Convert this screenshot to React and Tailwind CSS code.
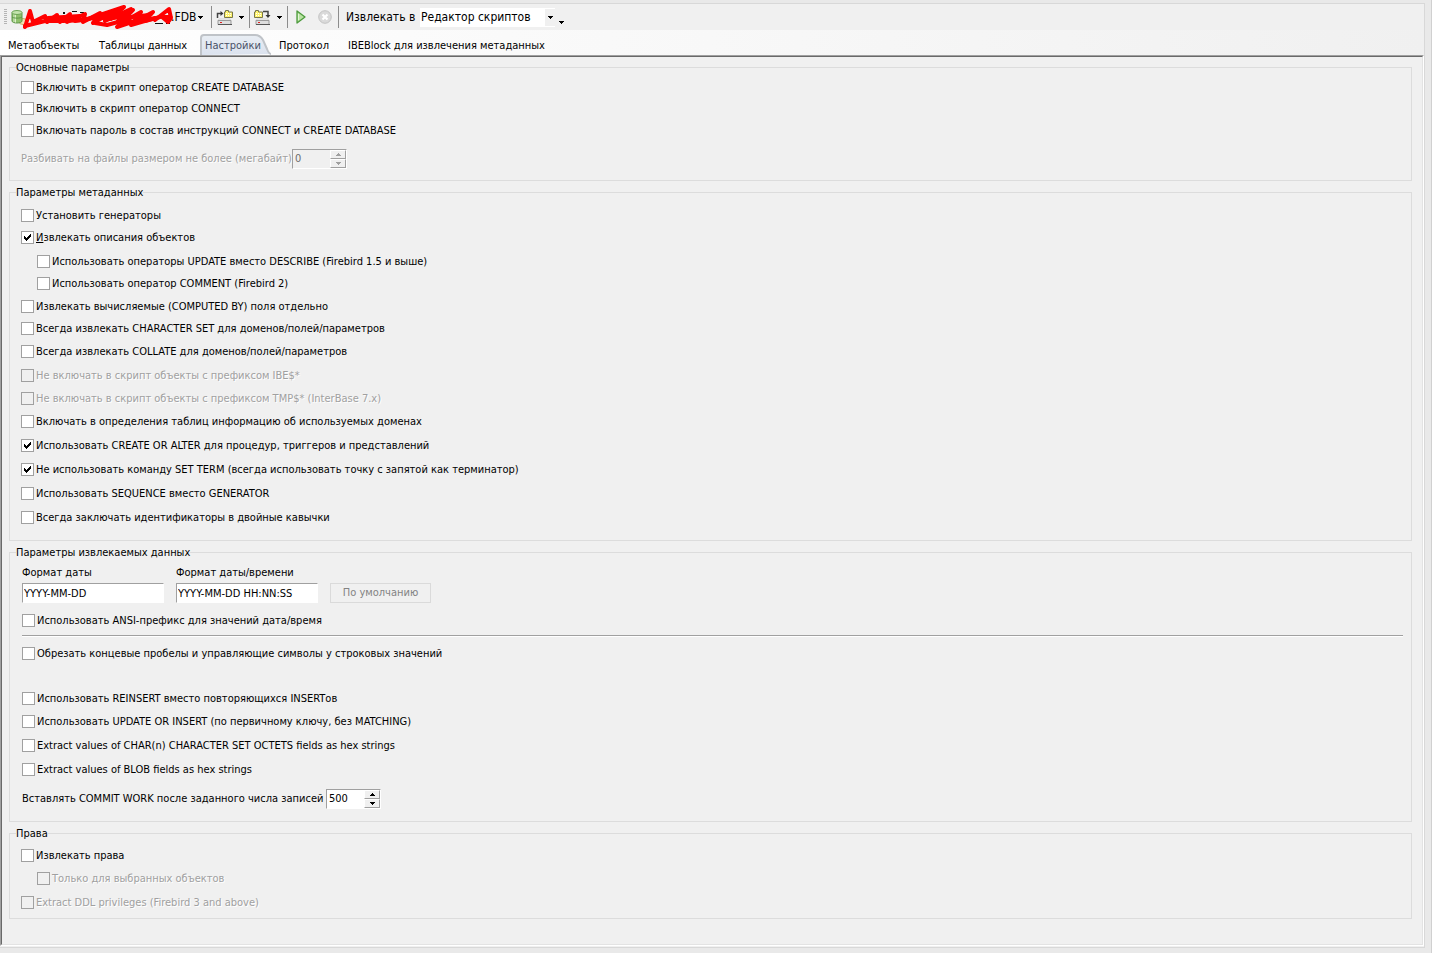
import { useState } from "react"
import clsx from "clsx"

const Check = ({ label, id, className, defaultChecked = false, disabled = false, accessKey }) => (
  <div className={clsx("flex h-4 items-center gap-0.5", className)}>
    <span className="grid shrink-0">
      <input
        id={id}
        type="checkbox"
        defaultChecked={defaultChecked}
        disabled={disabled}
        className="peer col-start-1 row-start-1 size-[13px] appearance-none border border-[#a0a0a0] bg-white disabled:bg-[#f0f0f0]"
      />
      <svg
        viewBox="0 0 13 13"
        shapeRendering="crispEdges"
        className="pointer-events-none invisible col-start-1 row-start-1 size-[13px] peer-checked:visible"
      >
        <path d="M3 5h1v1h1v1h1v-1h1v-1h1v-1h1v-1h1v3h-1v1h-1v1h-1v1h-1v1h-1v-1h-1v-1h-1z" />
      </svg>
    </span>
    <label
      htmlFor={id}
      className={clsx("pt-0.5 whitespace-nowrap", disabled && "text-[#a0a0a0] [text-shadow:1px_1px_0_#fff]")}
    >
      {accessKey ? (
        <>
          <u>{label[0]}</u>
          {label.slice(1)}
        </>
      ) : (
        label
      )}
    </label>
  </div>
)

const Group = ({ title, className, children }) => (
  <fieldset className="mt-1 min-w-0 border border-[#dcdcdc] first:mt-[3px]">
    <legend className="ml-1.5 h-3.5 leading-4">{title}</legend>
    <div className={className}>{children}</div>
  </fieldset>
)

const sunken = "border border-t-[#a0a0a0] border-l-[#a0a0a0] border-r-white border-b-white"

const SpinButton = ({ label, up, disabled, onClick }) => (
  <button
    type="button"
    aria-label={label}
    disabled={disabled}
    onClick={onClick}
    className="flex flex-1 items-center justify-center border border-t-white border-l-white border-r-[#a0a0a0] border-b-[#a0a0a0] bg-[#f0f0f0] text-black disabled:text-[#a0a0a0]"
  >
    <svg viewBox="0 0 5 3" className="h-[3px] w-[5px]" shapeRendering="crispEdges" fill="currentColor">
      <path d={up ? "M2 0h1v1h1v1h1v1H0V2h1V1h1z" : "M0 0h5v1H4v1H3v1H2V2H1V1H0z"} />
    </svg>
  </button>
)

const Spin = ({ id, initial, disabled = false }) => {
  const [value, setValue] = useState(initial)
  return (
    <div className={clsx("flex h-5 w-[55px]", sunken, disabled ? "bg-[#f0f0f0]" : "bg-white")}>
      <input
        id={id}
        type="text"
        value={value}
        disabled={disabled}
        onChange={(e) => setValue(Number(e.target.value) || 0)}
        className="w-0 flex-1 pl-0.5 outline-none disabled:text-[#6d6d6d]"
      />
      <div className="flex w-4 flex-col">
        <SpinButton label="Больше" up disabled={disabled} onClick={() => setValue(value + 1)} />
        <SpinButton label="Меньше" disabled={disabled} onClick={() => setValue(value - 1)} />
      </div>
    </div>
  )
}

const Arrow = () => (
  <svg viewBox="0 0 5 3" className="h-[3px] w-[5px] shrink-0" shapeRendering="crispEdges">
    <path d="M0 0h5v1H4v1H3v1H2V2H1V1H0z" />
  </svg>
)

const Separator = () => <div className="h-[22px] w-px shrink-0 bg-[#8c8c8c]" />

const DatabaseIcon = () => (
  <svg viewBox="0 0 16 16" className="size-4 shrink-0">
    <ellipse cx="12" cy="12.5" rx="4" ry="3" fill="#efe0b4" stroke="#c9ae68" />
    <path d="M1 3.5v8.5c0 1.2 2.2 2 5 2s5-.8 5-2V3.5z" fill="#8fc06c" stroke="#5c9648" />
    <path d="M3 5v8M4.500 5.500v8" stroke="#dcf0cc" />
    <ellipse cx="6" cy="3.5" rx="5" ry="2" fill="#c4e4ae" stroke="#6ba455" />
    <path d="M1 8c1 1.500 9 1.500 10 0" fill="none" stroke="#5c9648" />
  </svg>
)

const Scribble = () => (
  <svg viewBox="0 0 152 26" className="h-[26px] w-[152px]" fill="none">
    <path
      d="M40 8h2v2h-2zM49 7h5v1h-5zM57 8h4v1h-4zM106 18h5v1h-5zM112 17h3v1h-3zM132 19h8v1h-8zM143 19h4v1h-4z"
      fill="#111"
    />
    <g stroke="#f00" strokeWidth="4" strokeLinecap="round" strokeLinejoin="round">
      <path d="M2 23 7 7 10 18 22 12 24 18 34 11 37 18 47 10 44 18 62 10 60 18 77 9 70 19 92 7 82 17 108 5 95 17" />
      <path d="M2 22 22 17 40 17 62 16 86 8 101 3 88 15 110 6 97 20 118 8 110 19 130 8 122 17 137 13" />
      <path d="M72 19 84 21 106 15 94 23 121 14 108 21 132 14" />
      <path d="M25 14 57 12M52 17 82 12M82 15 104 12M100 14 126 11M132 16 146 5 148 14 145 18 139 13 148 13" />
    </g>
  </svg>
)

const Drive = () => (
  <>
    <path d="M3 10h11l1 2H2z" fill="#f4f4f4" stroke="#b5b5b5" strokeWidth=".5" />
    <path d="M2 11.500h13v4H2z" fill="#dedede" stroke="#9b9b9b" />
    <path d="M4 13h2v1H4z" fill="#e02020" />
    <path d="M2 15h14v1H2z" fill="#555" />
  </>
)

const FromFolderIcon = () => (
  <svg viewBox="0 0 17 17" className="size-[17px]">
    <path d="M9.500 3V1.500h3V3h4v5.500h-8V3z" fill="#fff36b" stroke="#77774a" />
    <path d="M10 4.500h6M10 6.500h6" stroke="#fff" strokeDasharray="1 1" />
    <path d="M1.500 9V4.500H5" fill="none" stroke="#444" strokeWidth="1.500" />
    <path d="M4.500 2v5l3-2.500z" fill="#333" />
    <Drive />
  </svg>
)

const ToFolderIcon = () => (
  <svg viewBox="0 0 17 17" className="size-[17px]">
    <path d="M1.500 3V1.500h3V3h4v5.500h-8V3z" fill="#fff36b" stroke="#77774a" />
    <path d="M2 4.500h6M2 6.500h6" stroke="#fff" strokeDasharray="1 1" />
    <path d="M9 2.500h5V7" fill="none" stroke="#444" strokeWidth="1.500" />
    <path d="M11.500 6h5L14 9z" fill="#333" />
    <Drive />
  </svg>
)

const PlayIcon = () => (
  <svg viewBox="0 0 10 14" className="h-3.5 w-2.5">
    <path d="M1 1v12l8-6z" fill="#b9e3a2" stroke="#4c9a3c" strokeWidth="1.300" strokeLinejoin="round" />
    <path d="M2.500 4v6" stroke="#e2f6d6" />
  </svg>
)

const StopIcon = () => (
  <svg viewBox="0 0 14 14" className="size-3.5">
    <circle cx="7" cy="7" r="6.300" fill="#dadada" stroke="#c3c3c3" />
    <path d="m4.500 4.500 5 5m0-5-5 5" stroke="#fff" strokeWidth="2.200" />
  </svg>
)

const Toolbar = () => (
  <div role="toolbar" className="flex h-[26px] items-center bg-[#f0f0f0] text-xs">
    <div className="ml-1 h-4 w-[3px] bg-[repeating-linear-gradient(#b4b4b4_0_1px,#f0f0f0_1px_2px)]" />
    <button type="button" className="ml-1 flex w-48 items-center">
      <DatabaseIcon />
      <span className="-ml-1">
        <Scribble />
      </span>
      <span className="-ml-1 flex-1 text-left">.FDB</span>
      <Arrow />
    </button>
    <div className="ml-2 flex items-center">
      <Separator />
      <button type="button" aria-label="Загрузить" className="ml-1 flex w-7 items-center justify-between">
        <FromFolderIcon />
        <Arrow />
      </button>
    </div>
    <div className="ml-[5px] flex items-center">
      <Separator />
      <button type="button" aria-label="Сохранить" className="ml-1 flex w-7 items-center justify-between">
        <ToFolderIcon />
        <Arrow />
      </button>
    </div>
    <div className="ml-[5px] flex items-center">
      <Separator />
      <button type="button" aria-label="Выполнить" className="ml-2">
        <PlayIcon />
      </button>
      <button type="button" aria-label="Остановить" disabled className="ml-3">
        <StopIcon />
      </button>
    </div>
    <div className="ml-1.5 flex items-center">
      <Separator />
      <label htmlFor="target" className="ml-[7px] w-[74px] whitespace-nowrap">
        Извлекать в
      </label>
      <div className="grid w-[135px] items-center">
        <select id="target" className="col-start-1 row-start-1 h-[19px] appearance-none bg-white pl-px">
          <option>Редактор скриптов</option>
        </select>
        <span className="pointer-events-none col-start-1 row-start-1 flex h-[17px] w-2.5 items-center justify-center justify-self-end bg-[#f0f0f0]">
          <Arrow />
        </span>
      </div>
      <button type="button" aria-label="Ещё" className="ml-1 pt-2.5">
        <Arrow />
      </button>
    </div>
  </div>
)

const tabs = [
  { title: "Метаобъекты", width: "w-[91px]" },
  { title: "Таблицы данных", width: "w-[106px]" },
  { title: "Настройки", width: "w-[74px]", active: true },
  { title: "Протокол", width: "w-[69px]" },
  { title: "IBEBlock для извлечения метаданных", width: "w-[200px]" },
]

const TabBar = () => (
  <div role="tablist" className="flex h-[25px] items-end bg-linear-to-r from-white via-[#f8f8f8] via-50% to-[#f0f0f0] pl-2">
    {tabs.map((tab) => (
      <button
        key={tab.title}
        type="button"
        role="tab"
        aria-selected={!!tab.active}
        className={clsx("relative h-[21px] pt-1 text-left whitespace-nowrap", tab.width, tab.active && "text-[#4a5268]")}
      >
        {tab.active && (
          <svg viewBox="0 0 72 21" className="absolute bottom-0 -left-[5px] h-[21px] w-[72px]" fill="none">
            <defs>
              <linearGradient id="tab" x1="0" y1="0" x2="0" y2="1">
                <stop offset="0" stopColor="#e9eef4" />
                <stop offset="1" stopColor="#dbe2ee" />
              </linearGradient>
            </defs>
            <path d="M1 21V4q0-3 3-3h51q5 0 8 5l4 9q2 5 4 5z" fill="url(#tab)" />
            <path d="M1 21V4q0-3 3-3h51q5 0 8 5l4 9q2 5 4 5" stroke="#bfc3c8" strokeWidth="2" />
          </svg>
        )}
        <span className="relative">{tab.title}</span>
      </button>
    ))}
  </div>
)

const metadataOptions = [
  { id: "generators", label: "Установить генераторы" },
  { id: "descriptions", label: "Извлекать описания объектов", className: "mt-1.5", defaultChecked: true, accessKey: true },
  { id: "describe", label: "Использовать операторы UPDATE вместо DESCRIBE (Firebird 1.5 и выше)", className: "mt-2 ml-4" },
  { id: "comment", label: "Использовать оператор COMMENT (Firebird 2)", className: "mt-1.5 ml-4" },
  { id: "computed", label: "Извлекать вычисляемые (COMPUTED BY) поля отдельно", className: "mt-[7px]" },
  { id: "charset", label: "Всегда извлекать CHARACTER SET для доменов/полей/параметров", className: "mt-1.5" },
  { id: "collate", label: "Всегда извлекать COLLATE для доменов/полей/параметров", className: "mt-[7px]" },
  { id: "ibe", label: "Не включать в скрипт объекты с префиксом IBE$*", className: "mt-2", disabled: true },
  { id: "tmp", label: "Не включать в скрипт объекты с префиксом TMP$* (InterBase 7.x)", className: "mt-[7px]", disabled: true },
  { id: "domains", label: "Включать в определения таблиц информацию об используемых доменах", className: "mt-[7px]" },
  { id: "alter", label: "Использовать CREATE OR ALTER для процедур, триггеров и представлений", className: "mt-2", defaultChecked: true },
  { id: "term", label: "Не использовать команду SET TERM (всегда использовать точку с запятой как терминатор)", className: "mt-2", defaultChecked: true },
  { id: "sequence", label: "Использовать SEQUENCE вместо GENERATOR", className: "mt-2" },
  { id: "quotes", label: "Всегда заключать идентификаторы в двойные кавычки", className: "mt-2" },
]

const FormatField = ({ id, label, value }) => (
  <div className="w-[142px]">
    <label htmlFor={id} className="block h-4 pt-px leading-4 whitespace-nowrap">
      {label}
    </label>
    <input
      id={id}
      type="text"
      defaultValue={value}
      className={clsx("mt-[3px] block h-5 w-full bg-white pl-px outline-none", sunken)}
    />
  </div>
)

const Settings = () => (
  <>
    <Group title="Основные параметры" className="pt-[5px] pr-2 pb-[11px] pl-[11px]">
      <Check id="create-db" label="Включить в скрипт оператор CREATE DATABASE" />
      <Check id="connect" label="Включить в скрипт оператор CONNECT" className="mt-[5px]" />
      <Check id="password" label="Включать пароль в состав инструкций CONNECT и CREATE DATABASE" className="mt-1.5" />
      <div className="mt-[11px] flex items-center">
        <label htmlFor="split" className="w-[271px] whitespace-nowrap text-[#a0a0a0] [text-shadow:1px_1px_0_#fff]">
          Разбивать на файлы размером не более (мегабайт)
        </label>
        <Spin id="split" initial={0} disabled />
      </div>
    </Group>

    <Group title="Параметры метаданных" className="pt-2 pr-2 pb-[15px] pl-[11px]">
      {metadataOptions.map((option) => (
        <Check key={option.id} {...option} />
      ))}
    </Group>

    <Group title="Параметры извлекаемых данных" className="pt-[5px] pr-2 pb-3 pl-3">
      <div className="flex items-end gap-3">
        <FormatField id="date-format" label="Формат даты" value="YYYY-MM-DD" />
        <FormatField id="datetime-format" label="Формат даты/времени" value="YYYY-MM-DD HH:NN:SS" />
        <button type="button" disabled className="h-5 w-[101px] border border-[#dadada] pt-px text-[#838383]">
          По умолчанию
        </button>
      </div>
      <Check id="ansi" label="Использовать ANSI-префикс для значений дата/время" className="mt-[9px]" />
      <hr className="mt-[7px] border-t border-b border-t-[#a0a0a0] border-b-white" />
      <Check id="trim" label="Обрезать концевые пробелы и управляющие символы у строковых значений" className="mt-2" />
      <Check id="reinsert" label="Использовать REINSERT вместо повторяющихся INSERTов" className="mt-[29px]" />
      <Check id="update" label="Использовать UPDATE OR INSERT (по первичному ключу, без MATCHING)" className="mt-[7px]" />
      <Check id="octets" label="Extract values of CHAR(n) CHARACTER SET OCTETS fields as hex strings" className="mt-2" />
      <Check id="blob" label="Extract values of BLOB fields as hex strings" className="mt-2" />
      <div className="mt-3 flex items-center">
        <label htmlFor="commit" className="w-[304px] whitespace-nowrap">
          Вставлять COMMIT WORK после заданного числа записей
        </label>
        <Spin id="commit" initial={500} />
      </div>
    </Group>

    <Group title="Права" className="pt-[7px] pr-2 pb-2 pl-[11px]">
      <Check id="grants" label="Извлекать права" />
      <Check id="selected" label="Только для выбранных объектов" className="mt-[7px] ml-4" disabled />
      <Check id="ddl" label="Extract DDL privileges (Firebird 3 and above)" className="mt-2" disabled />
    </Group>
  </>
)

const App = () => (
  <div className="flex min-h-screen flex-col border-r border-[#d0d0d0] bg-[#e9e9e9] pt-[3px] pr-1.5 pb-[5px] font-['DejaVu_Sans_Condensed','DejaVu_Sans',sans-serif] text-[11px] text-black">
    <div className="flex flex-1 flex-col border-t border-r border-b border-[#d8d8d8] bg-[#f0f0f0] pb-px">
      <Toolbar />
      <TabBar />
      <main className="flex flex-1 flex-col border border-t-[#a0a0a0] border-r-white border-b-white border-l-[#a0a0a0]">
        <div className="flex-1 border border-t-[#696969] border-r-[#e3e3e3] border-b-[#e3e3e3] border-l-[#696969] pr-2.5 pl-[7px]">
          <Settings />
        </div>
      </main>
    </div>
  </div>
)

export default App
